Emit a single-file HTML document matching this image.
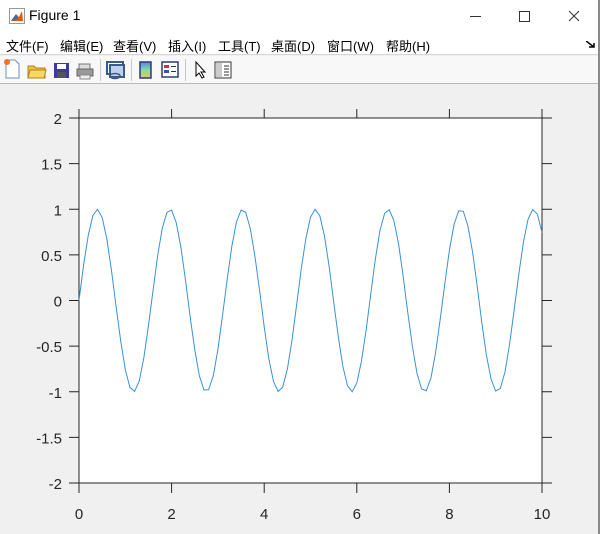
<!DOCTYPE html>
<html><head><meta charset="utf-8"><style>
*{margin:0;padding:0;box-sizing:border-box}
body{width:600px;height:534px;overflow:hidden;background:#f0f0f0;font-family:"Liberation Sans","Noto Sans CJK SC",sans-serif;position:relative}
#title{position:absolute;left:0;top:0;width:600px;height:32px;background:#fff}
#title .t{position:absolute;left:29px;top:7px;font-size:14px;color:#000}
#menu{position:absolute;left:0;top:32px;width:600px;height:23px;background:#fff;border-bottom:1px solid #d6d6d6;font-size:13px}
#menu span{position:absolute;top:4px;white-space:nowrap}
#tool{position:absolute;left:0;top:56px;width:600px;height:28px;background:#f8f8f8;border-bottom:1px solid #b8b8b8}
.sep{position:absolute;top:3px;width:1px;height:22px;background:#c8c8c8}
#rb{position:absolute;right:0;top:0;width:2px;height:534px;background:#8a8a8a}
</style></head><body>
<div id="title">
<svg style="position:absolute;left:9px;top:8px" width="16" height="16"><rect x="0.5" y="0.5" width="15" height="15" fill="#fff" stroke="#999"/><path d="M2 13 L7 6 L10 9 L13 3 L14 13 Z" fill="#e05a10"/><path d="M2 13 L7 6 L9 11Z" fill="#2a6fc0"/></svg>
<span class="t">Figure 1</span>
<svg style="position:absolute;left:468px;top:8px" width="120" height="16" stroke="#333" fill="none" stroke-width="1"><line x1="2" y1="8.5" x2="13" y2="8.5"/><rect x="51.5" y="3.5" width="10" height="10"/><path d="M101 3 L111 13 M111 3 L101 13"/></svg>
</div>
<div id="menu">
<span style="left:6px">文件(F)</span><span style="left:60px">编辑(E)</span><span style="left:113px">查看(V)</span><span style="left:168px">插入(I)</span><span style="left:218px">工具(T)</span><span style="left:271px">桌面(D)</span><span style="left:327px">窗口(W)</span><span style="left:386px">帮助(H)</span>
<svg style="position:absolute;left:586px;top:9px" width="9" height="7"><path d="M0 0 L8 6 M3 6 L8 6 L8 2" stroke="#000" stroke-width="1.5" fill="none"/></svg>
</div>
<div id="tool">
<svg width="240" height="28" style="position:absolute;left:0;top:0">
<path d="M6 4 H15 L19 8 V22 H6Z" fill="#fff" stroke="#6b8fb8"/><circle cx="7" cy="6" r="3" fill="#f07030"/>
<path d="M28 10 H34 L36 12 H45 V22 H28Z" fill="#f0c040" stroke="#b08020"/><path d="M30 14 H46 L44 22 H28Z" fill="#f8d860" stroke="#b08020"/>
<rect x="54" y="7" width="15" height="15" fill="#3a3aa0"/><rect x="57" y="8" width="9" height="5" fill="#fff"/><rect x="57" y="16" width="9" height="6" fill="#555"/>
<path d="M79 8 H90 V13 H79Z" fill="#ddd" stroke="#777"/><path d="M77 13 H93 V20 H77Z" fill="#999" stroke="#666"/><rect x="80" y="19" width="10" height="4" fill="#eee" stroke="#888"/>
<rect x="107" y="6" width="16" height="12" fill="#fff" stroke="#3a5a8a" stroke-width="2"/><rect x="110" y="9" width="14" height="12" fill="#c0d0e8" stroke="#3a5a8a" stroke-width="2"/><ellipse cx="115" cy="20" rx="5" ry="2.5" fill="none" stroke="#3a5a8a" stroke-width="1.5"/>
<defs><linearGradient id="g" x1="0" y1="0" x2="0" y2="1"><stop offset="0" stop-color="#6080e8"/><stop offset=".5" stop-color="#80e0a0"/><stop offset="1" stop-color="#f0c060"/></linearGradient></defs>
<rect x="140" y="6" width="11" height="16" fill="url(#g)" stroke="#2a3a7a" stroke-width="1.5"/>
<rect x="162" y="6" width="16" height="15" fill="#fff" stroke="#2a3a7a" stroke-width="1.5"/><rect x="164" y="9" width="5" height="3" fill="#d03030"/><rect x="164" y="14" width="5" height="3" fill="#3050c0"/><rect x="171" y="10" width="5" height="1" fill="#333"/><rect x="171" y="15" width="5" height="1" fill="#333"/>
<path d="M196 6 L196 20 L199 17 L202 22 L204 21 L201 16 L205 16Z" fill="#fff" stroke="#000"/>
<rect x="215" y="6" width="16" height="16" fill="#fff" stroke="#333"/><rect x="216" y="7" width="6" height="14" fill="#ccc"/><path d="M224 10 H229 M224 13 H229 M224 16 H229 M224 19 H229" stroke="#333"/>
</svg>
<div class="sep" style="left:100px"></div><div class="sep" style="left:131px"></div><div class="sep" style="left:185px"></div>
</div>
<div id="rb"></div>
<svg id="plot" width="600" height="534" style="position:absolute;left:0;top:0" font-family="Liberation Sans, sans-serif" font-size="15" fill="#262626"></svg>
<script>
var s=document.getElementById('plot'),h='';
var L=79,R=542,T=118,B=483;
function X(v){return L+(R-L)*v/10}function Y(v){return B-(B-T)*(v+2)/4}
h+='<rect x="'+L+'" y="'+T+'" width="'+(R-L)+'" height="'+(B-T)+'" fill="#fff" stroke="#262626" stroke-width="1"/>';
for(var i=0;i<=5;i++){var x=X(i*2);h+='<line x1="'+x+'" y1="'+B+'" x2="'+x+'" y2="'+(B+10)+'" stroke="#262626"/><line x1="'+x+'" y1="'+T+'" x2="'+x+'" y2="'+(T-9)+'" stroke="#262626"/><text x="'+x+'" y="'+(B+36)+'" text-anchor="middle">'+(i*2)+'</text>';}
var yl=['-2','-1.5','-1','-0.5','0','0.5','1','1.5','2'];
for(var j=0;j<9;j++){var y=Y(-2+j*0.5);h+='<line x1="'+L+'" y1="'+y+'" x2="'+(L-10)+'" y2="'+y+'" stroke="#262626"/><line x1="'+R+'" y1="'+y+'" x2="'+(R+10)+'" y2="'+y+'" stroke="#262626"/><text x="'+(L-17)+'" y="'+(y+6)+'" text-anchor="end">'+yl[j]+'</text>';}
var p=[];for(var k=0;k<=100;k++){var t=k/10;p.push(X(t).toFixed(1)+','+Y(Math.sin(4*t)).toFixed(1));}
h+='<polyline points="'+p.join(' ')+'" fill="none" stroke="#3a90d8" stroke-width="1"/>';
s.innerHTML=h;
</script>
</body></html>
